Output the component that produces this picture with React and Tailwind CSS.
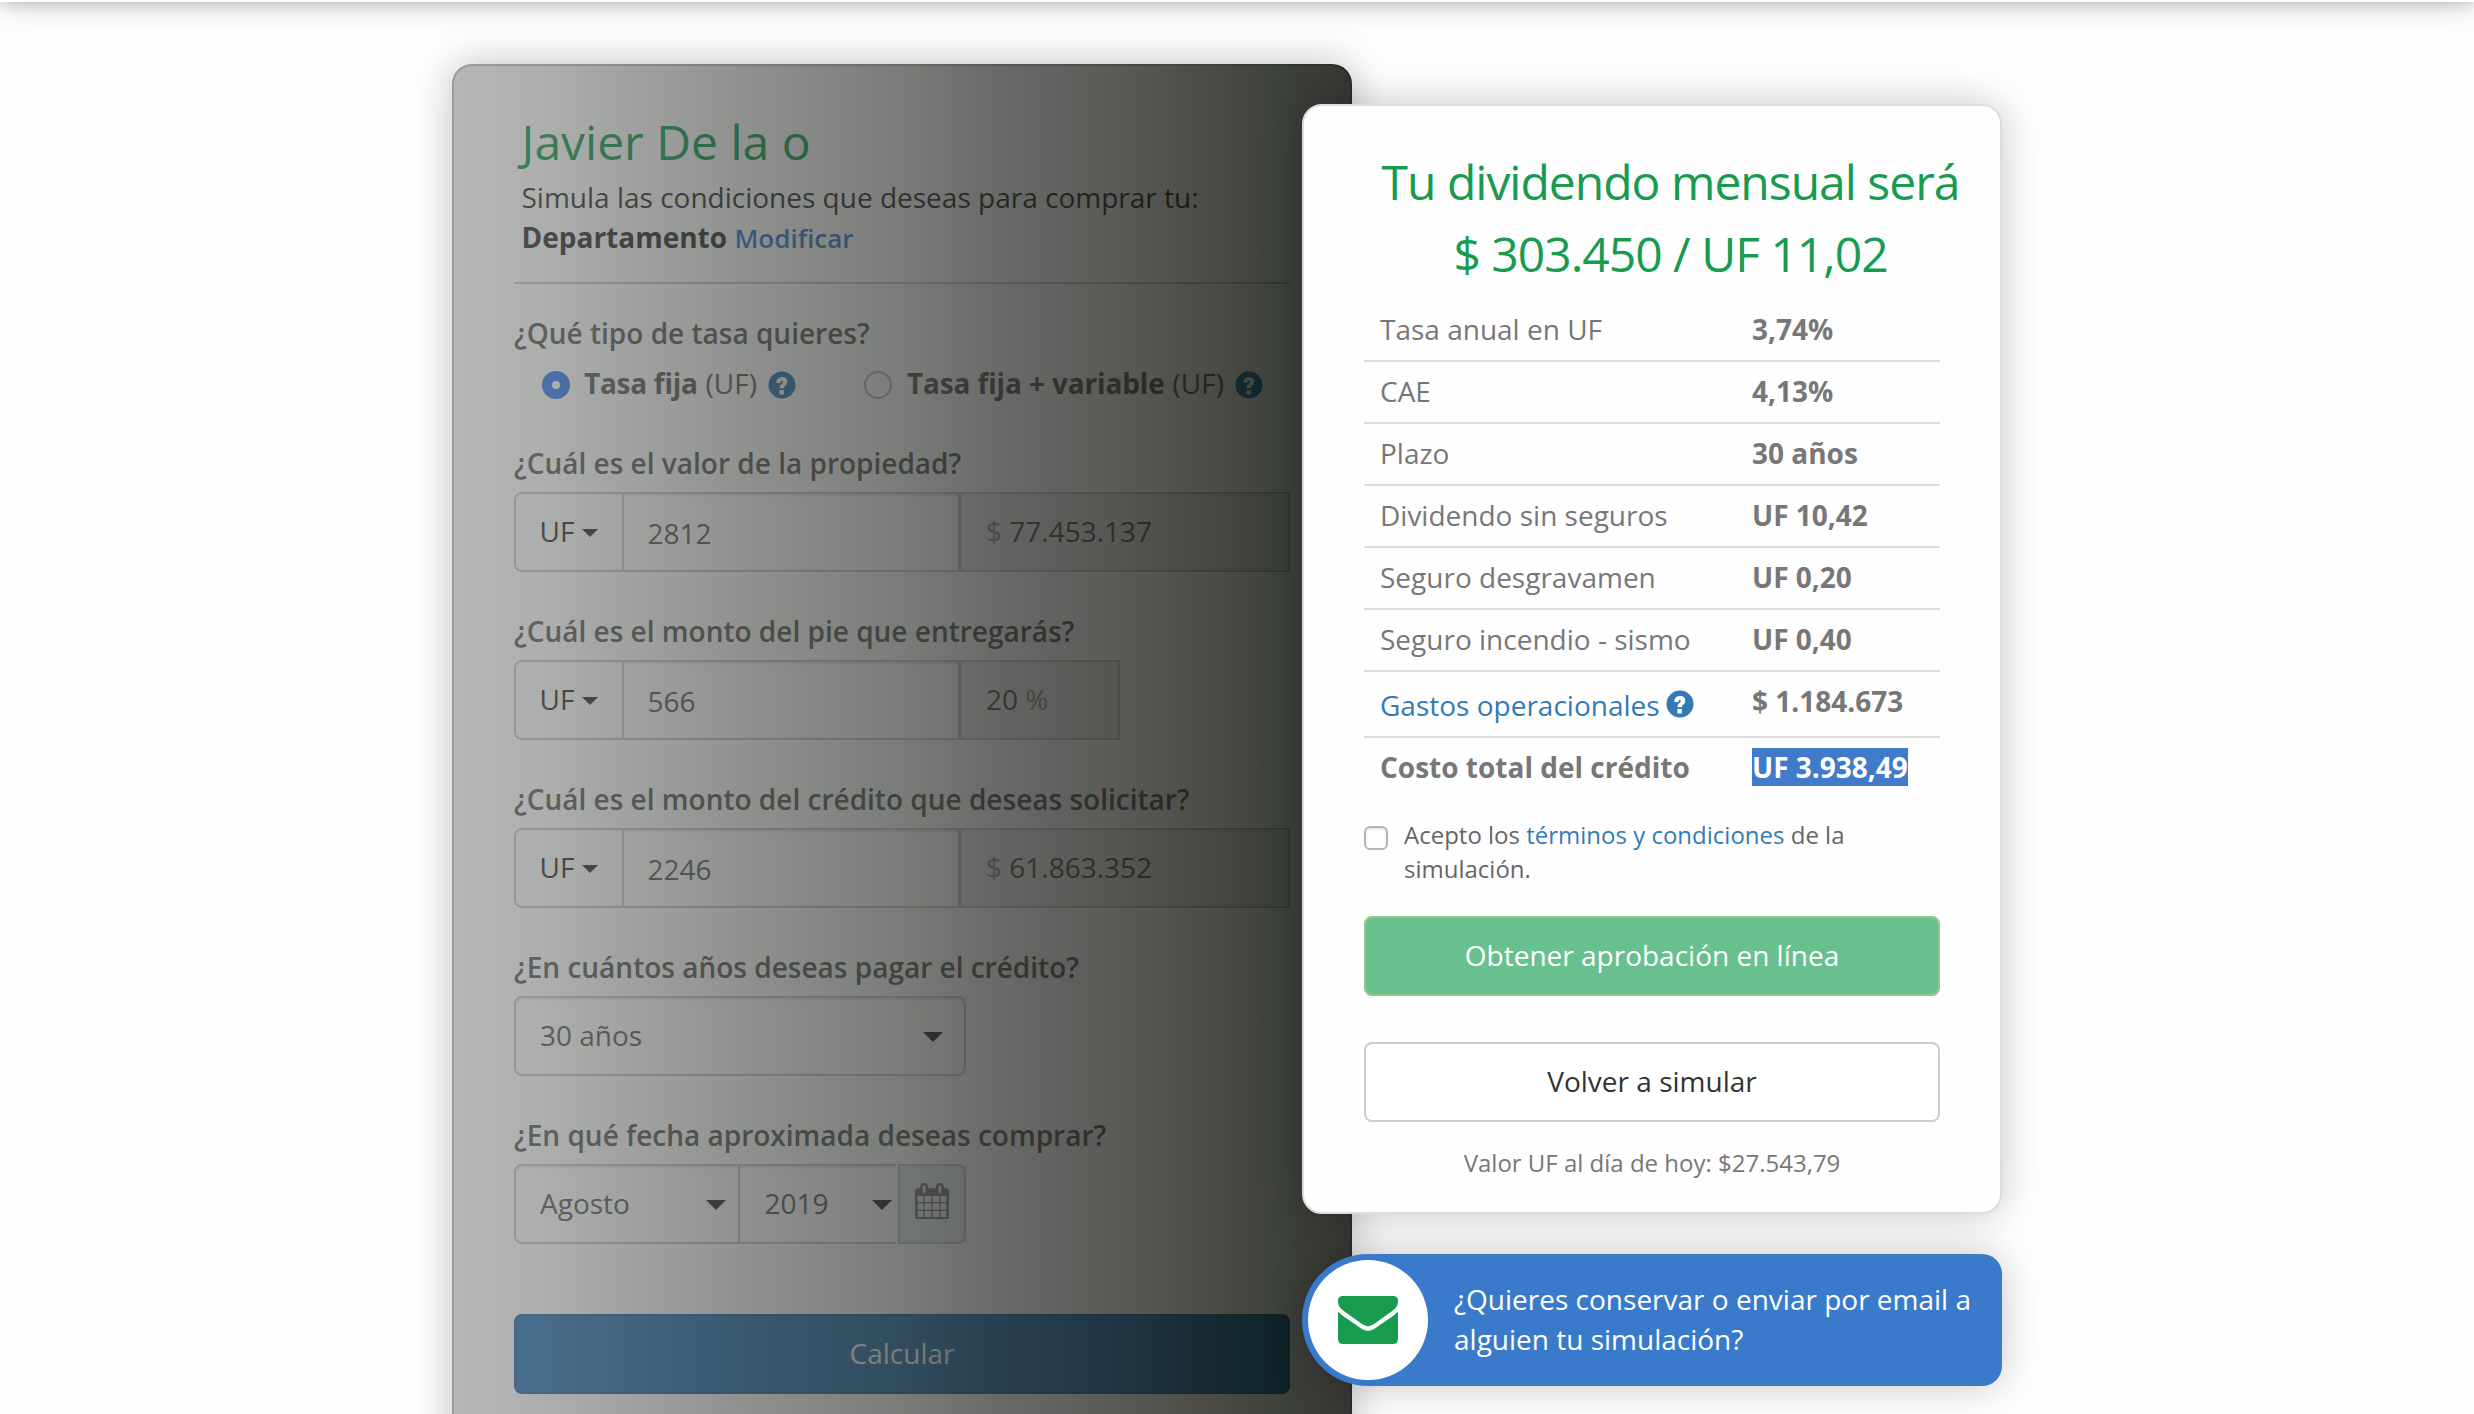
const HelpIcon = ({ className = "" }) => (
  <svg viewBox="0 0 28 28" className={`size-7 shrink-0 ${className}`} fill="currentColor">
    <path
      fillRule="evenodd"
      d="M14 .5a13.5 13.5 0 1 1 0 27a13.5 13.5 0 0 1 0-27ZM8.3 12C8.3 8 10.5 6 13.8 6C17.3 6 19.3 8 19.3 10.8C19.3 13 18 14.2 16.9 15C16.1 15.6 15.9 16 15.9 17.3H11.5C11.5 14.9 12 14 13.5 12.9C14.5 12.2 14.8 11.7 14.8 11C14.8 10.2 14.3 9.8 13.8 9.8C13 9.8 12.5 10.4 12.5 12ZM11.4 19h4.5v4.4h-4.5Z"
    />
  </svg>
);

const CalendarIcon = () => (
  <svg viewBox="0 0 1664 1792" className="h-[36.6px] w-[34px] text-[#808080]" fill="currentColor">
    <path d="M128 1664h288v-288h-288v288zm352 0h320v-288h-320v288zm-352-352h288v-320h-288v320zm352 0h320v-320h-320v320zm-352-384h288v-288h-288v288zm736 736h320v-288h-320v288zm-384-736h320v-288h-320v288zm768 736h288v-288h-288v288zm-384-352h320v-320h-320v320zm-352-864v-288q0-13-9.5-22.5t-22.5-9.5h-64q-13 0-22.5 9.5t-9.5 22.5v288q0 13 9.5 22.5t22.5 9.5h64q13 0 22.5-9.5t9.5-22.5zm736 864h288v-320h-288v320zm-384-384h320v-288h-320v288zm384 0h288v-288h-288v288zm32-480v-288q0-13-9.5-22.5t-22.5-9.5h-64q-13 0-22.5 9.5t-9.5 22.5v288q0 13 9.5 22.5t22.5 9.5h64q13 0 22.5-9.5t9.5-22.5zm384-64v1280q0 52-38 90t-90 38h-1408q-52 0-90-38t-38-90v-1280q0-52 38-90t90-38h128v-96q0-66 47-113t113-47h64q66 0 113 47t47 113v96h384v-96q0-66 47-113t113-47h64q66 0 113 47t47 113v96h128q52 0 90 38t38 90z" />
  </svg>
);

const EnvelopeIcon = () => (
  <svg viewBox="0 0 60 48" className="h-12 w-[60px]" fill="#179b4e">
    <path d="M5 0H55Q60 0 60 5C60 10 57.5 12.5 54.5 14.7L36 28Q30 32.3 24 28L5.500 14.700C2.500 12.500 0 10 0 5Q0 0 5 0Z" />
    <path d="M0 15.500Q1.500 17.300 3 18.400L23.500 32.800Q30 37 36.500 32.800L57 18.400Q58.500 17.300 60 15.500V43Q60 48 55 48H5Q0 48 0 43Z" />
  </svg>
);

const Caret = ({ className = "" }) => (
  <svg viewBox="0 0 20 10" className={`shrink-0 ${className}`} fill="currentColor">
    <path d="M0 0H20L10 10Z" />
  </svg>
);

const Label = ({ children }) => <div className="mb-[9px] h-10 font-semibold">{children}</div>;

function MoneyField({ label, value, children, narrow }) {
  return (
    <div className="mb-[39px]">
      <Label>{label}</Label>
      <div className="flex h-20 leading-10">
        <div className="flex w-[108px] items-center rounded-l-lg border-2 border-r-0 border-[#ccc] pb-0.5 pl-[23.5px] text-[#333]">
          UF
          <Caret className="mt-1 ml-2 h-2 w-4" />
        </div>
        <div className="flex w-[338px] items-center border-2 border-[#ccc] pt-0.5 pl-[23.5px] shadow-[inset_0_2px_2px_rgba(0,0,0,0.075)]">
          {value}
        </div>
        <div
          className={`flex items-center border-2 border-[#ccc] bg-[#f0f0f0] pb-0.5 pl-6 ${narrow ? "w-[160px]" : "w-[330px]"}`}
        >
          <span className="whitespace-pre">{children}</span>
        </div>
      </div>
    </div>
  );
}

const results = [
  ["Tasa anual en UF", "3,74%"],
  ["CAE", "4,13%"],
  ["Plazo", "30 años"],
  ["Dividendo sin seguros", "UF 10,42"],
  ["Seguro desgravamen", "UF 0,20"],
  ["Seguro incendio - sismo", "UF 0,40"],
];

const selectBox =
  "flex h-20 items-center border-2 border-[#ccc] pb-0.5 shadow-[inset_0_2px_2px_rgba(0,0,0,0.075)]";

function SimulationForm() {
  return (
    <section className="relative h-[1420px] w-[900px] shrink-0 rounded-t-[20px] border-2 border-[#ccc] bg-white px-[60px] pt-[42px] text-[#606060] shadow-[0_0_40px_rgba(0,0,0,0.25)]">
      <header className="border-b-2 border-[#ccc] pb-6 pl-[7.5px] text-[#333]">
        <h1 className="h-[69px] text-[48px] leading-[68px] text-[#179b4e]">Javier De la o</h1>
        <p>Simula las condiciones que deseas para comprar tu:</p>
        <p>
          <b>Departamento</b> <span className="text-[26px] font-semibold text-[#3a79cb]">Modificar</span>
        </p>
      </header>

      <div className="mt-[29px] h-10 font-semibold">¿Qué tipo de tasa quieres?</div>
      <div className="mt-[10px] mb-10 flex h-10 items-center pl-7">
        <span className="mt-1 grid size-7 place-items-center rounded-full bg-[#3b7ff5]">
          <span className="size-2 rounded-full bg-white" />
        </span>
        <b className="ml-[14px] tracking-[-0.28px]">Tasa fija</b>
        <span className="ml-2">(UF)</span>
        <HelpIcon className="mt-1 ml-[11px] text-[#337ab7]" />
        <span className="mt-1 ml-[68px] size-7 rounded-full border-2 border-[#bbb]" />
        <b className="ml-[15px] tracking-[-0.14px]">Tasa fija + variable</b>
        <span className="ml-2">(UF)</span>
        <HelpIcon className="mt-1 ml-[11px] text-[#337ab7]" />
      </div>

      <div className="-mr-4">
        <MoneyField label="¿Cuál es el valor de la propiedad?" value="2812">
          <span className="text-[#999]">$ </span>77.453.137
        </MoneyField>
        <MoneyField label="¿Cuál es el monto del pie que entregarás?" value="566" narrow>
          20<span className="text-[#999]"> %</span>
        </MoneyField>
        <MoneyField label="¿Cuál es el monto del crédito que deseas solicitar?" value="2246">
          <span className="text-[#999]">$ </span>61.863.352
        </MoneyField>
      </div>

      <Label>¿En cuántos años deseas pagar el crédito?</Label>
      <div className={`${selectBox} mb-[39px] w-[452px] justify-between rounded-lg pr-[21px] pl-[24px]`}>
        30 años
        <Caret className="mt-1 h-2.5 w-5 text-[#333]" />
      </div>

      <Label>¿En qué fecha aproximada deseas comprar?</Label>
      <div className="mb-[70px] flex">
        <div className={`${selectBox} w-[226px] justify-between rounded-l-lg pr-[12px] pl-[24px]`}>
          Agosto
          <Caret className="mt-1 h-2.5 w-5 text-[#333]" />
        </div>
        <div className={`${selectBox} w-[156px] justify-between border-x-0 pr-[4px] pl-[24.5px]`}>
          2019
          <Caret className="mt-1 h-2.5 w-5 text-[#333]" />
        </div>
        <div className="ml-0.5 flex h-20 w-[68px] items-center justify-center rounded-r-lg border-2 border-[#ccc] bg-[#e9eef0] pb-1.5">
          <CalendarIcon />
        </div>
      </div>

      <div className="flex h-20 w-[776px] items-center justify-center rounded-lg border-2 border-[#2e6da4] bg-[#337ab7] pb-0.5 text-white">
        Calcular
      </div>

      <div className="absolute -inset-0.5 rounded-t-[20px] bg-[linear-gradient(to_right,rgba(100,100,108,0.47)_0%,rgba(93,96,93,0.505)_10%,rgba(64,67,64,0.57)_30%,rgba(47,50,45,0.64)_50%,rgba(34,36,32,0.675)_60%,rgba(23,25,20,0.72)_75%,rgba(16,17,8,0.745)_83%,rgba(5,11,1,0.775)_92%,rgba(4,4,0,0.8)_100%)]" />
    </section>
  );
}

function ResultCard() {
  return (
    <section className="h-[1110px] rounded-[20px] border-2 border-[#ddd] bg-[#fefefe] px-[60px] pt-[26px] text-[#777] shadow-[0_0_40px_rgba(0,0,0,0.22)]">
      <h2 className="-mr-[37px] h-[168px] pt-[14px] text-center text-[48px] leading-[72px] tracking-[-1px] whitespace-nowrap text-[#179b4e]">
        Tu dividendo mensual será
        <br />$ 303.450 / UF 11,02
      </h2>
      <dl>
        {results.map(([name, value]) => (
          <div key={name} className="flex h-[62px] border-b-2 border-[#ddd] pt-[9px] pl-4">
            <dt className="w-[372px]">{name}</dt>
            <dd className="font-bold">{value}</dd>
          </div>
        ))}
        <div className="flex h-[66px] border-b-2 border-[#ddd] pt-[9px] pl-4">
          <dt className="flex w-[372px] pt-1 text-[#337ab7]">
            Gastos operacionales
            <HelpIcon className="mt-[5px] ml-[6px]" />
          </dt>
          <dd className="font-bold">$ 1.184.673</dd>
        </div>
        <div className="flex h-[78px] pt-[9px] pl-4 font-bold">
          <dt className="w-[372px]">Costo total del crédito</dt>
          <dd>
            <span className="bg-[#3f7acb] text-white">UF 3.938,49</span>
          </dd>
        </div>
      </dl>
      <div className="flex h-[100px] gap-4 text-2xl leading-[34px] text-[#666]">
        <span className="mt-[10px] size-6 shrink-0 rounded-md border-2 border-[#b4b4b4] bg-white shadow-[inset_0_1px_2px_rgba(0,0,0,0.15)]" />
        <p className="pt-0.5">
          Acepto los <span className="text-[#337ab7]">términos y condiciones</span> de la
          <br />
          simulación.
        </p>
      </div>
      <div className="flex h-20 items-center justify-center rounded-lg border-2 border-[#8cc98c] bg-[#68c08f] pb-0.5 text-white">
        Obtener aprobación en línea
      </div>
      <div className="mt-[46px] flex h-20 items-center justify-center rounded-lg border-2 border-[#ccc] bg-white pb-0.5 text-[#333]">
        Volver a simular
      </div>
      <p className="mt-6 text-center text-2xl leading-[34px]">Valor UF al día de hoy: $27.543,79</p>
    </section>
  );
}

export default function App() {
  return (
    <div className="h-[1414px] w-[2474px] overflow-hidden bg-[#fdfefd] font-['Open_Sans',sans-serif] text-[28px] leading-10">
      <div className="-mt-[98px] h-[100px] bg-white shadow-[0_0_36px_rgba(0,0,0,0.2),0_0_14px_rgba(0,0,0,0.22)]" />
      <main className="flex items-start pt-[62px] pl-[452px]">
        <SimulationForm />
        <div className="relative mt-10 -ml-[50px] w-[700px] shrink-0">
          <ResultCard />
          <div className="mt-10 flex h-[132px] items-center rounded-l-[66px] rounded-r-[20px] bg-[#3a7acb] pl-1.5 text-white shadow-[0_0_40px_rgba(0,0,0,0.22)]">
            <div className="grid size-[120px] shrink-0 place-items-center rounded-full bg-white">
              <EnvelopeIcon />
            </div>
            <p className="ml-[26px] pb-0.5 whitespace-nowrap">
              ¿Quieres conservar o enviar por email a
              <br />
              alguien tu simulación?
            </p>
          </div>
        </div>
      </main>
    </div>
  );
}
